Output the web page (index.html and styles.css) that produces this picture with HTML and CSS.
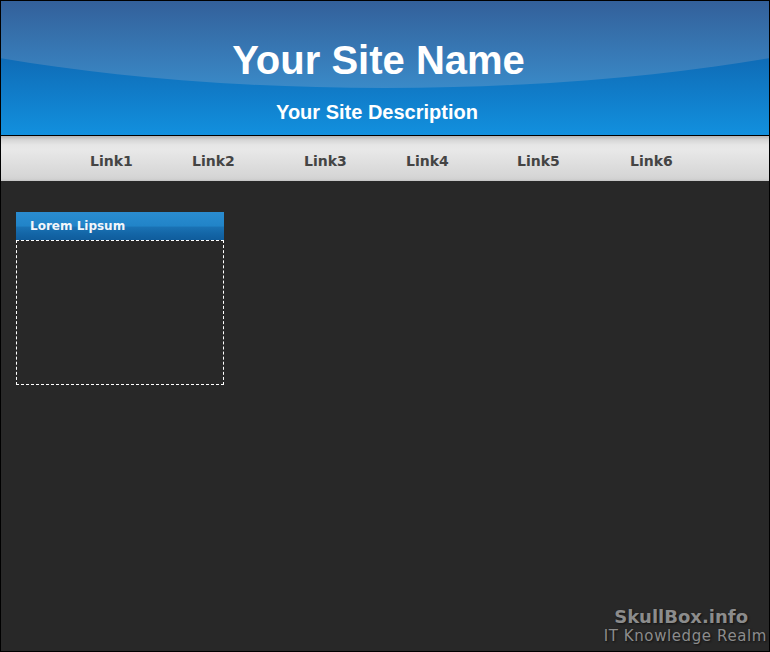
FILE: index.html
```html
<!DOCTYPE html>
<html>
<head>
<meta charset="utf-8">
<link rel="stylesheet" href="styles.css">
</head>
<body>
<div class="page">
  <header class="header">
    <h1 class="site-name">Your Site Name</h1>
    <p class="site-desc">Your Site Description</p>
  </header>
  <nav class="nav">
    <a class="nav-link" href="#">Link1</a>
    <a class="nav-link" href="#">Link2</a>
    <a class="nav-link" href="#">Link3</a>
    <a class="nav-link" href="#">Link4</a>
    <a class="nav-link" href="#">Link5</a>
    <a class="nav-link" href="#">Link6</a>
  </nav>
  <main class="content">
    <section class="box">
      <h2 class="box-title">Lorem Lipsum</h2>
      <div class="box-body"></div>
    </section>
  </main>
  <footer class="footer">
    <div class="brand">SkullBox.info</div>
    <div class="tagline">IT Knowledge Realm</div>
  </footer>
</div>
</body>
</html>
```
FILE: styles.css
```css
html, body {
  margin: 0;
  padding: 0;
}
body {
  background: #282828;
}
.page {
  box-sizing: border-box;
  width: 770px;
  height: 652px;
  border: 1px solid #000;
  background: #282828;
  display: flex;
  flex-direction: column;
}
.header {
  position: relative;
  overflow: hidden;
  height: 135px;
  flex: none;
  border-bottom: 1px solid #000;
  background: linear-gradient(to bottom, #0d62ad 0px, #0f6db8 60px, #1290de 134px);
  text-align: center;
  font-family: "Liberation Sans", Arial, sans-serif;
  color: #fff;
  padding-top: 39px;
  box-sizing: border-box;
}
.header::before {
  content: "";
  position: absolute;
  left: -316px;
  top: -277px;
  width: 1400px;
  height: 364px;
  border-radius: 50%;
  background: linear-gradient(to bottom, #33609a 0px, #33609a 277px, #3a8ac8 364px);
}
.site-name {
  position: relative;
  margin: 0;
  font-size: 40px;
  line-height: 40px;
  font-weight: bold;
  padding-right: 13px;
}
.site-desc {
  position: relative;
  margin: 22px 0 0;
  font-size: 20px;
  line-height: 20px;
  font-weight: bold;
  padding-right: 16px;
}
.nav {
  height: 45px;
  flex: none;
  box-sizing: border-box;
  padding: 6px 0 0 89px;
  background: linear-gradient(to bottom, #b4b4b4 0px, #d6d6d6 4px, #e6e6e6 9px, #e8e8e8 14px, #d6d6d6 40px, #d2d2d2 43px, #c4c4c4 45px);
  display: grid;
  grid-template-columns: 102px 112px 102px 111px 113px auto;
  font-family: "DejaVu Sans", Verdana, sans-serif;
}
.nav-link {
  font-size: 14px;
  line-height: 39px;
  font-weight: bold;
  color: #444;
  text-decoration: none;
}
.content {
  flex: 1;
  padding: 31px 0 0 15px;
}
.box {
  width: 208px;
}
.box-title {
  margin: 0;
  height: 28px;
  line-height: 29px;
  padding-left: 14px;
  font-family: "DejaVu Sans", Verdana, sans-serif;
  font-size: 12px;
  font-weight: bold;
  color: #f2f6fa;
  background: linear-gradient(to bottom, #2a8cd0 0%, #2184c8 50%, #1a72b4 54%, #1467a8 75%, #0f5c9c 100%);
}
.box-body {
  box-sizing: border-box;
  height: 145px;
  border: 1px dashed #fff;
}
.footer {
  text-align: right;
  padding: 0 2px 5px 0;
  font-family: "DejaVu Sans", Verdana, sans-serif;
  color: #8c8c8c;
  text-shadow: 1px 1px 2px #111;
}
.brand {
  font-size: 18px;
  font-weight: bold;
  line-height: 21px;
  padding-right: 19px;
}
.tagline {
  font-size: 15px;
  line-height: 19px;
  letter-spacing: 0.6px;
}
```
